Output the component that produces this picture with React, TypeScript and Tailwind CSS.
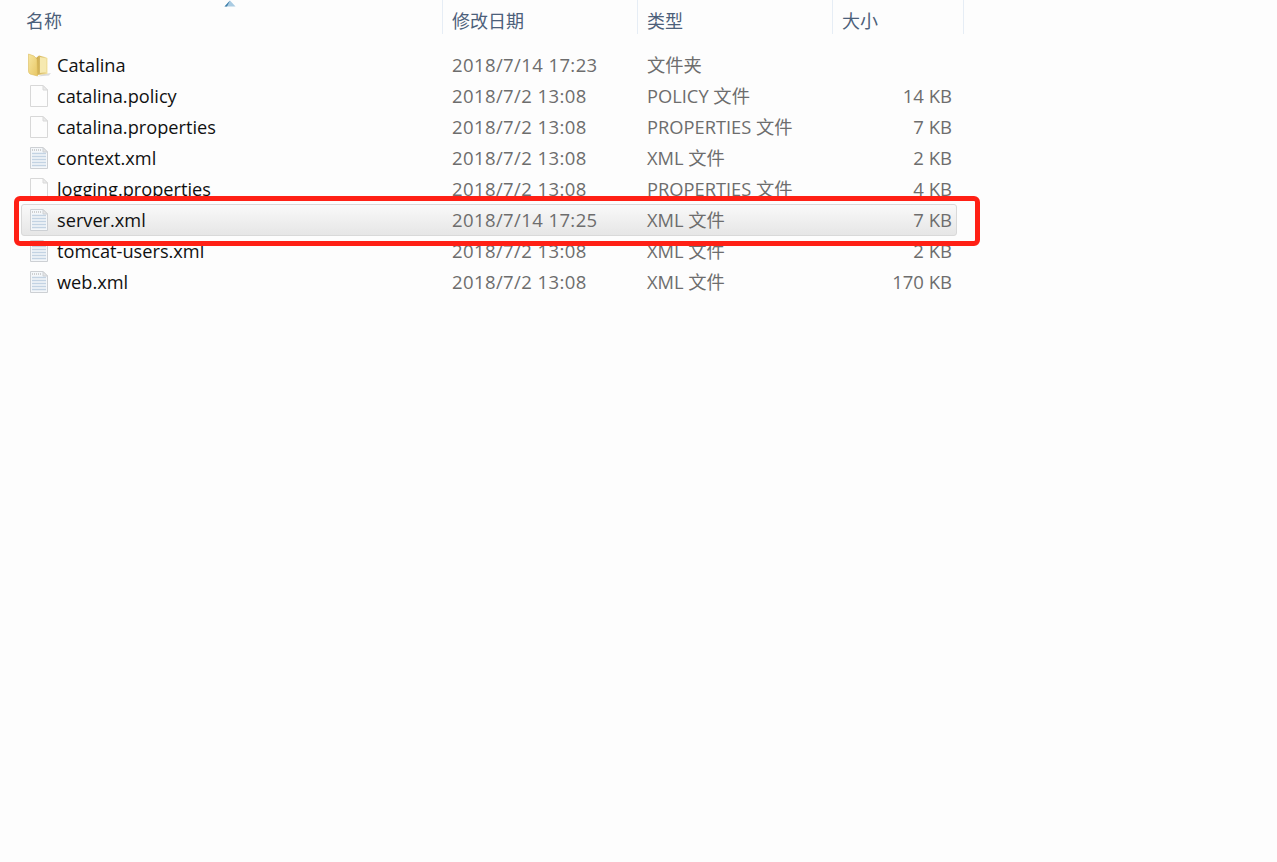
const files = [
  { name: 'Catalina', date: '2018/7/14 17:23', type: '文件夹', size: '', icon: 'folder' },
  { name: 'catalina.policy', date: '2018/7/2 13:08', type: 'POLICY 文件', size: '14 KB', icon: 'blank' },
  { name: 'catalina.properties', date: '2018/7/2 13:08', type: 'PROPERTIES 文件', size: '7 KB', icon: 'blank' },
  { name: 'context.xml', date: '2018/7/2 13:08', type: 'XML 文件', size: '2 KB', icon: 'lines' },
  { name: 'logging.properties', date: '2018/7/2 13:08', type: 'PROPERTIES 文件', size: '4 KB', icon: 'blank' },
  { name: 'server.xml', date: '2018/7/14 17:25', type: 'XML 文件', size: '7 KB', icon: 'lines', selected: true },
  { name: 'tomcat-users.xml', date: '2018/7/2 13:08', type: 'XML 文件', size: '2 KB', icon: 'lines' },
  { name: 'web.xml', date: '2018/7/2 13:08', type: 'XML 文件', size: '170 KB', icon: 'lines' },
];

const FolderIcon = () => (
  <svg width="24" height="24" viewBox="0 0 24 24">
    <defs>
      <linearGradient id="folderBack" x1="0" y1="0" x2="1" y2="0">
        <stop offset="0" stopColor="#c9a544" />
        <stop offset="1" stopColor="#f4e4a4" />
      </linearGradient>
      <linearGradient id="folderFlap" x1="0" y1="0" x2="1" y2="1">
        <stop offset="0" stopColor="#f7e6a0" />
        <stop offset="1" stopColor="#e8c765" />
      </linearGradient>
    </defs>
    <path d="M17 21 L24 20 L22 22.5 L10 23.5 Z" fill="#dcdcdc" />
    <path d="M9 5 L12 2.5 L18 4 L20.5 5 L20.5 21 L9 22 Z" fill="url(#folderBack)" />
    <path d="M13 4 L19 5.5 L19 19 L13 20 Z" fill="#f6e9b0" />
    <path d="M1.5 1 L7 3 L10 6 L10.5 23 L3 21 Q1.5 20 1.5 18 Z" fill="url(#folderFlap)" stroke="#dcbc5c" strokeWidth="0.6" />
  </svg>
);

const BlankIcon = () => (
  <svg width="24" height="24" viewBox="0 0 24 24">
    <path d="M3.5 1.5 H16 L20.5 6 V22.5 H3.5 Z" fill="#fdfdfd" stroke="#d8d8d8" />
    <path d="M16 1.5 V6 H20.5 Z" fill="#ececec" stroke="#d8d8d8" />
  </svg>
);

const LinesIcon = () => (
  <svg width="24" height="24" viewBox="0 0 24 24">
    <path d="M3.5 1.5 H16 L20.5 6 V22.5 H3.5 Z" fill="#f4f7fa" stroke="#cdd0d4" />
    <path d="M16 1.5 V6 H20.5 Z" fill="#e6e6e6" stroke="#cdd0d4" />
    <path d="M5 4 H14" stroke="#a8a8a8" strokeWidth="1" strokeDasharray="1 1" />
    <path d="M5 7.5 H19 M5 10.5 H19 M5 13.5 H19 M5 16.5 H19 M5 19.5 H19" stroke="#c3d3e3" strokeWidth="1.6" />
  </svg>
);

export default function App() {
  return (
    <div className="relative min-h-[862px] bg-[#fdfdfd] font-['Open_Sans','Noto_Sans_CJK_SC',sans-serif] text-[18.5px] overflow-hidden">
      {/* column headers */}
      <div className="relative grid grid-cols-[442px_195px_195px_132px] w-[964px] h-[34px] font-['Noto_Sans_CJK_SC',sans-serif] text-[18px] text-[#4c607a]">
        <div className="pl-[26px] pt-[7px] leading-[26px]">名称</div>
        <div className="pl-[9px] pt-[7px] leading-[26px] border-l border-[#e6edf5]">修改日期</div>
        <div className="pl-[9px] pt-[7px] leading-[26px] border-l border-[#e6edf5]">类型</div>
        <div className="pl-[9px] pt-[7px] leading-[26px] border-l border-r border-[#e6edf5]">大小</div>
        <svg className="absolute left-[224px] top-0" width="12" height="7" viewBox="0 0 12 7">
          <path d="M6 0.5 L11.5 6.5 H0.5 Z" fill="#a9cbe2" />
          <path d="M6 0.5 L3 6.5 H0.5 Z" fill="#3f7fa8" />
        </svg>
      </div>

      {/* file rows */}
      <div className="pt-[15px] w-[964px]">
        {files.map((f) => (
          <div key={f.name} className="relative grid grid-cols-[442px_195px_195px_126px] items-center h-[31px] leading-[26px] text-[#6d6d6d]">
            {f.selected && (
              <div className="absolute left-[21px] right-[7px] top-0 bottom-[-1px] rounded-[3px] border border-[#d9d9d9] bg-gradient-to-b from-[#f9f9f9] to-[#e6e6e6]" />
            )}
            <div className="relative flex items-center pl-[27px] gap-[6px] text-[18.2px] text-[#111111] overflow-hidden">
              {f.icon === 'folder' && <FolderIcon />}
              {f.icon === 'blank' && <BlankIcon />}
              {f.icon === 'lines' && <LinesIcon />}
              <span>{f.name}</span>
            </div>
            <div className="relative pl-[10px] tracking-[0.4px]">{f.date}</div>
            <div className="relative pl-[10px] text-[18.3px]">{f.type}</div>
            <div className="relative text-right pr-[6px]">{f.size}</div>
          </div>
        ))}
      </div>

      {/* red highlight drawn over the screenshot */}
      <div className="absolute left-[14px] top-[196px] w-[966px] h-[50px] rounded-[6px] border-[5px] border-[#ff2015]" />
    </div>
  );
}
